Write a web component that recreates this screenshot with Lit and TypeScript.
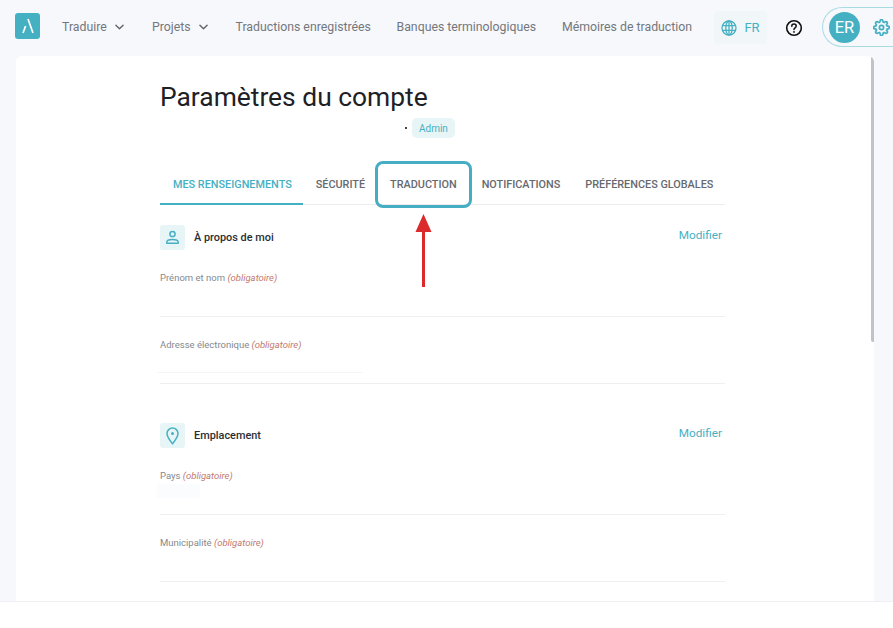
import { LitElement, html, css, svg } from "lit";
import { customElement } from "lit/decorators.js";

const chevron = html`<svg class="chev" viewBox="0 0 10 6" width="9" height="6"><path d="M1 1l4 4 4-4" fill="none" stroke="#5f6368" stroke-width="1.5" stroke-linecap="round" stroke-linejoin="round"/></svg>`;

@customElement("app-root")
export class AppRoot extends LitElement {
  static styles = css`
    :host { display: block; width: 893px; height: 628px; overflow: hidden; position: relative; background: #fff; font-family: Roboto, "Liberation Sans", sans-serif; }
    .page { height: 601px; background: #f7f8fc; border-bottom: 1px solid #eeeef3; box-sizing: content-box; display: flex; flex-direction: column; overflow: hidden; }
    header { height: 56px; flex: none; display: flex; align-items: center; padding-left: 15px; color: #73777c; font-size: 12.3px; }
    .logo { width: 25px; height: 26px; flex: none; border-radius: 3px; background: #46b0c3; display: flex; align-items: center; justify-content: center; margin-right: 22px; margin-top: -4px; }
    nav { display: flex; align-items: center; margin-top: -2px; flex: none; }
    .nav-item { white-space: nowrap; display: flex; align-items: center; flex: none; }
    .chev { margin-left: 8px; }
    .n1 { width: 90px; } .n2 { width: 83.5px; } .n3 { width: 161px; } .n4 { width: 165.5px; } .n5 { width: 152px; }
    .lang { width: 53px; height: 33px; background: #f1f6f9; border-radius: 4px; display: flex; align-items: center; justify-content: center; gap: 7px; color: #46b0c3; font-size: 13px; margin-top: -1px; flex: none; }
    .help { margin-left: 18px; margin-top: -1px; flex: none; display: block; }
    .user { margin-left: 19px; width: 90px; height: 40px; border: 1.5px solid #a9dbe3; border-right: none; border-radius: 21px 0 0 21px; display: flex; align-items: center; padding-left: 6px; box-sizing: border-box; gap: 13px; flex: none; margin-top: -2px; }
    .avatar { width: 31px; height: 31px; border-radius: 50%; background: #46b0c3; color: #fff; font-size: 16.5px; display: flex; align-items: center; justify-content: center; flex: none; }
    .card { flex: 1; margin: 0 19px 0 16px; background: #fff; border-radius: 6px 6px 0 0; position: relative; padding: 24px 0 0 144px; min-height: 0; overflow: hidden; }
    .inner { width: 565px; }
    h1 { margin: 0; font-size: 26.4px; font-weight: 400; color: #1d2126; line-height: 34px; }
    .role { display: flex; align-items: center; justify-content: flex-start; margin: 4px 0 0 245px; height: 20px; font-size: 10px; color: #46b0c3; }
    .dot { width: 1.5px; height: 1.5px; background: #444; margin-right: 5px; }
    .badge { background: #e8f5f7; border-radius: 5px; height: 20px; padding: 0 7.5px; display: flex; align-items: center; }
    .tabs { display: flex; margin-top: 26px; border-bottom: 1px solid #ececef; height: 40px; box-sizing: content-box; }
    .tab { padding: 0 12.5px; height: 40px; display: flex; align-items: center; font-size: 10.85px; font-weight: 500; color: #66696e; white-space: nowrap; box-sizing: border-box; }
    .tab.active { color: #46b0c3; border-bottom: 2px solid #46b0c3; height: 41px; padding: 2px 11.5px 0 13px; }
    .sec-head { display: flex; align-items: center; gap: 9px; height: 25px; position: relative; }
    .sec-icon { width: 25px; height: 25px; border-radius: 3px; background: #e8f5f7; display: flex; align-items: center; justify-content: center; }
    .sec-title { font-size: 10.9px; color: #2a2e33; font-weight: 500; flex: 1; }
    .edit { font-size: 11.8px; color: #46b0c3; margin: -5px 3px 0 0; }
    .s1 { margin-top: 20px; } .s2 { margin-top: 39px; }
    .field { height: 67px; box-sizing: border-box; border-bottom: 1px solid #efeff1; font-size: 9.5px; color: #85898e; padding-top: 22px; line-height: 12px; position: relative; }
    .req { color: #bf7a70; font-style: italic; }
    .ghost { position: absolute; left: -3px; width: 206px; top: 55px; height: 1px; background: #f6f6f7; }
    .haze { position: absolute; left: -3px; width: 43px; top: 36px; height: 14px; background: #fbfcfd; }
    .scroll { position: absolute; left: 855px; top: 0; width: 4px; height: 286px; background: #c0c3c7; border-radius: 0 0 2px 2px; }
    .mark { position: absolute; left: 375px; top: 161px; width: 97px; height: 47px; border: 3px solid #46aec2; border-radius: 8px; box-sizing: border-box; pointer-events: none; }
    .arrow { position: absolute; left: 415px; top: 214px; display: block; }
  `;

  private field(label: string, extra: unknown = "") {
    return html`<div class="field">${label} <span class="req">(obligatoire)</span>${extra}</div>`;
  }

  render() {
    return html`
      <div class="page">
        <header>
          <div class="logo"><svg width="12" height="16" viewBox="0 0 12 16" fill="none" stroke="#fff" stroke-width="1.7"><path d="M6 1L11 15M3.600 8L1 15"/></svg></div>
          <nav>
            <div class="nav-item n1">Traduire ${chevron}</div>
            <div class="nav-item n2">Projets ${chevron}</div>
            <div class="nav-item n3">Traductions enregistrées</div>
            <div class="nav-item n4">Banques terminologiques</div>
            <div class="nav-item n5">Mémoires de traduction</div>
          </nav>
          <div class="lang">
            <svg width="16" height="16" viewBox="0 0 16 16" fill="none" stroke="#46b0c3" stroke-width="1.3"><circle cx="8" cy="8" r="7"/><ellipse cx="8" cy="8" rx="3.200" ry="7"/><path d="M1.300 5.600h13.400M1.300 10.400h13.400M8 1v14"/></svg>
            FR
          </div>
          <svg class="help" width="18" height="18" viewBox="0 0 18 18" fill="none"><circle cx="9" cy="9" r="7.300" stroke="#111" stroke-width="1.600"/><path d="M6.800 7.200c0-1.300 1-2.100 2.200-2.100s2.200.8 2.200 2c0 1.700-2.200 1.700-2.200 3.400" stroke="#111" stroke-width="1.500" stroke-linecap="round"/><circle cx="9" cy="12.900" r=".9" fill="#111"/></svg>
          <div class="user">
            <div class="avatar">ER</div>
            <svg width="17" height="17" viewBox="0 0 24 24" fill="none" stroke="#46b0c3" stroke-width="2.5" stroke-linecap="round" stroke-linejoin="round"><circle cx="12" cy="12" r="3"/><path d="M19.400 15a1.650 1.650 0 0 0 .33 1.820l.06.06a2 2 0 1 1-2.830 2.830l-.06-.06a1.650 1.650 0 0 0-2.820 1.170V21a2 2 0 0 1-4 0v-.09A1.650 1.650 0 0 0 7.200 19.700l-.06.06a2 2 0 1 1-2.830-2.830l.06-.06a1.650 1.650 0 0 0-1.170-2.820H3a2 2 0 0 1 0-4h.09A1.650 1.650 0 0 0 4.300 7.200l-.06-.06a2 2 0 1 1 2.830-2.830l.06.06a1.650 1.650 0 0 0 2.820-1.170V3a2 2 0 0 1 4 0v.09a1.650 1.650 0 0 0 2.820 1.170l.06-.06a2 2 0 1 1 2.830 2.830l-.06.06a1.650 1.650 0 0 0 1.170 2.820H21a2 2 0 0 1 0 4h-.09A1.650 1.650 0 0 0 19.400 15z"/></svg>
          </div>
        </header>
        <main class="card">
          <div class="inner">
            <h1>Paramètres du compte</h1>
            <div class="role"><span class="dot"></span><span class="badge">Admin</span></div>
            <div class="tabs">
              <div class="tab active">MES RENSEIGNEMENTS</div>
              <div class="tab">SÉCURITÉ</div>
              <div class="tab">TRADUCTION</div>
              <div class="tab">NOTIFICATIONS</div>
              <div class="tab">PRÉFÉRENCES GLOBALES</div>
            </div>
            <section class="s1">
              <div class="sec-head">
                <div class="sec-icon"><svg width="15" height="15" viewBox="0 0 15 15" fill="none" stroke="#46b0c3" stroke-width="1.500"><circle cx="7.500" cy="4" r="2.600"/><path d="M1.800 13.200v-1c0-1.600 2.600-2.600 5.700-2.600s5.700 1 5.700 2.600v1z" stroke-linejoin="round"/></svg></div>
                <div class="sec-title">À propos de moi</div>
                <div class="edit">Modifier</div>
              </div>
              ${this.field("Prénom et nom")}
              ${this.field("Adresse électronique", html`<div class="ghost"></div>`)}
            </section>
            <section class="s2">
              <div class="sec-head">
                <div class="sec-icon"><svg width="13" height="18" viewBox="0 0 13 18" fill="none" stroke="#46b0c3" stroke-width="1.500"><path d="M6.500 16.800C4 13.500 1 10 1 6.500a5.500 5.500 0 0 1 11 0c0 3.500-3 7-5.500 10.300z" stroke-linejoin="round"/><circle cx="6.500" cy="6.500" r="1.500" fill="#46b0c3" stroke="none"/></svg></div>
                <div class="sec-title">Emplacement</div>
                <div class="edit">Modifier</div>
              </div>
              ${this.field("Pays", html`<div class="haze"></div>`)}
              ${this.field("Municipalité")}
            </section>
          </div>
          <div class="scroll"></div>
        </main>
      </div>
      <div class="mark"></div>
      <svg class="arrow" width="18" height="74" viewBox="0 0 18 74">${svg`<path d="M8.500 0L16.500 18H10V73H7V18H.5z" fill="#dc2a2c"/>`}</svg>
    `;
  }
}
